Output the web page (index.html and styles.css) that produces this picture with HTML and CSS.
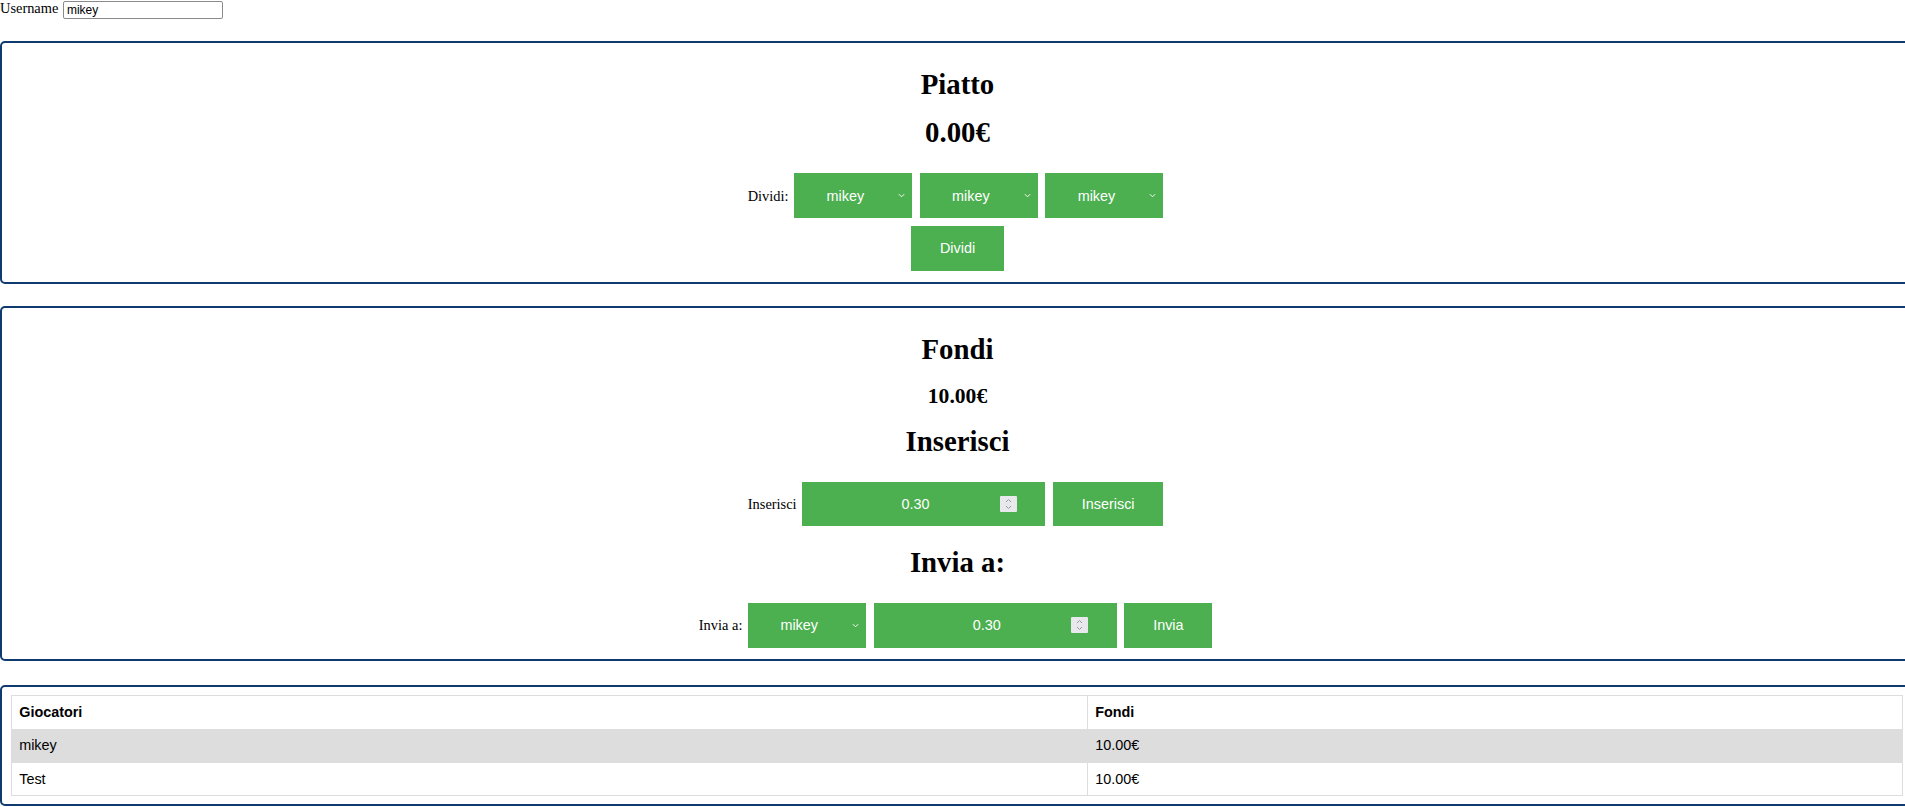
FILE: index.html
```html
<!DOCTYPE html>
<html lang="it">
<head>
    <meta charset="UTF-8">
    <meta name="viewport" content="width=device-width, initial-scale=1.0">
    <title>Piatto</title>
    <link rel="stylesheet" href="styles.css">
</head>
<body>
    <!-- Username -->
    <div class="user-row">
        <label for="username">Username</label>
        <input type="text" id="username" class="user-input" value="mikey">
    </div>

    <!-- Piatto -->
    <section class="panel">
        <h1 class="panel-title">Piatto</h1>
        <h1 class="amount">0.00€</h1>
        <div class="form-row">
            <label>Dividi:</label>
            <span class="pick">
                <select><option>mikey</option><option>Test</option></select>
                <svg class="chevron" viewBox="0 0 8 5"><polyline points="1,1 4,4 7,1"/></svg>
            </span>
            <span class="pick">
                <select><option>mikey</option><option>Test</option></select>
                <svg class="chevron" viewBox="0 0 8 5"><polyline points="1,1 4,4 7,1"/></svg>
            </span>
            <span class="pick">
                <select><option>mikey</option><option>Test</option></select>
                <svg class="chevron" viewBox="0 0 8 5"><polyline points="1,1 4,4 7,1"/></svg>
            </span>
        </div>
        <div class="form-row submit last">
            <button class="btn">Dividi</button>
        </div>
    </section>

    <!-- Fondi -->
    <section class="panel">
        <h1 class="panel-title">Fondi</h1>
        <h2 class="balance">10.00€</h2>
        <h1 class="section-title">Inserisci</h1>
        <div class="form-row">
            <label>Inserisci</label>
            <span class="num">
                <input type="text" value="0.30">
                <svg class="spin" viewBox="0 0 17 16"><rect width="17" height="16" rx="1"/><polyline points="6,6 8.5,3.5 11,6"/><polyline points="6,10 8.5,12.5 11,10"/></svg>
            </span>
            <button class="btn">Inserisci</button>
        </div>
        <h1 class="section-title after-row">Invia a:</h1>
        <div class="form-row last">
            <label>Invia a:</label>
            <span class="pick">
                <select><option>mikey</option><option>Test</option></select>
                <svg class="chevron" viewBox="0 0 8 5"><polyline points="1,1 4,4 7,1"/></svg>
            </span>
            <span class="num">
                <input type="text" value="0.30">
                <svg class="spin" viewBox="0 0 17 16"><rect width="17" height="16" rx="1"/><polyline points="6,6 8.5,3.5 11,6"/><polyline points="6,10 8.5,12.5 11,10"/></svg>
            </span>
            <button class="btn">Invia</button>
        </div>
    </section>

    <!-- Giocatori -->
    <section class="panel players-panel">
        <table class="players">
            <tr><th>Giocatori</th><th>Fondi</th></tr>
            <tr><td>mikey</td><td>10.00€</td></tr>
            <tr><td>Test</td><td>10.00€</td></tr>
        </table>
    </section>
</body>
</html>
```

FILE: styles.css
```css
/* Global */
body {
    margin: 0;
    font-family: 'Liberation Serif', 'Times New Roman', serif;
    font-size: 14.4px;
    color: #000;
    background: #fff;
}

/* Username */
.user-row {
    height: 19px;
    line-height: 16px;
}
.user-input {
    width: 160px;
    height: 18px;
    box-sizing: border-box;
    margin: 1px 0 0 1px;
    padding: 1px 3px;
    border: 1px solid #8a8a8a;
    border-radius: 2px;
    font-family: 'Liberation Sans', Arial, sans-serif;
    font-size: 12px;
    vertical-align: top;
}

/* Panels */
.panel {
    width: 100%;
    padding: 3px;
    margin: 22px 0 0;
    border: 2px solid #0e3a70;
    border-radius: 5px;
    text-align: center;
}
.players-panel {
    margin-top: 24px;
}
.panel h1,
.panel h2 {
    margin: 0;
    font-weight: bold;
}
.panel h1 {
    font-size: 28.8px;
    line-height: 32px;
}
.panel h2 {
    font-size: 21.6px;
    line-height: 24px;
}
.panel-title {
    margin-top: 21.6px !important;
}
.amount {
    margin-top: 16.5px !important;
}
.balance {
    margin-top: 19.3px !important;
}
.section-title {
    margin-top: 16.4px !important;
}
.section-title.after-row {
    margin-top: 19.3px !important;
}

/* Form rows */
.form-row {
    display: flex;
    justify-content: center;
    align-items: center;
    margin-top: 25.2px;
    line-height: 16px;
}
.form-row.submit {
    margin-top: 8.1px;
}
.form-row.last {
    margin-bottom: 8.8px;
}
.form-row label {
    margin-right: 2px;
}

.pick,
.num,
.btn {
    height: 44.6px;
    box-sizing: border-box;
    margin: 0 3.8px;
    background-color: #4caf50;
    color: #fff;
    font-family: 'Liberation Sans', Arial, sans-serif;
    font-size: 14.4px;
}
.pick {
    display: inline-flex;
    align-items: center;
    width: 118px;
}
.pick select {
    flex: 0 0 102px;
    appearance: none;
    -webkit-appearance: none;
    border: none;
    outline: none;
    padding: 0;
    background: transparent;
    color: #fff;
    font: inherit;
    text-align: center;
    text-align-last: center;
}
.chevron {
    width: 7px;
    height: 5px;
    margin-left: 2px;
    fill: none;
    stroke: #fff;
    stroke-width: 1.1;
}

.num {
    display: inline-flex;
    align-items: center;
    width: 243px;
    padding: 0 28.8px;
}
.num input {
    flex: 1;
    min-width: 0;
    border: none;
    outline: none;
    padding: 0;
    background: transparent;
    color: #fff;
    font: inherit;
    text-align: center;
}
.spin {
    width: 17px;
    height: 16px;
}
.spin rect {
    fill: #e9e9ed;
}
.spin polyline {
    fill: none;
    stroke: #9a9aa0;
    stroke-width: 1;
}

.btn {
    padding: 0 28.8px;
    border: none;
    cursor: pointer;
    line-height: 16px;
}

/* Players table */
.players {
    width: calc(100% - 13px);
    margin: 5px 6px;
    border-collapse: collapse;
    font-family: 'Liberation Sans', Arial, sans-serif;
    font-size: 14.4px;
    text-align: left;
}
.players th,
.players td {
    padding: 7.9px 7.2px;
    border: 1px solid #ddd;
    line-height: 16.5px;
}
.players th:first-child {
    width: 56.9%;
}
.players tr:nth-child(even) {
    background-color: #ddd;
}
```
